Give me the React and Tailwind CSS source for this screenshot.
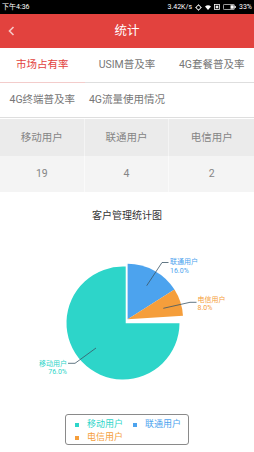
import React from 'react';

const font = { fontFamily: "Roboto, 'Noto Sans CJK SC', sans-serif" };

const tabs = [
  ['市场占有率', 'USIM普及率', '4G套餐普及率'],
  ['4G终端普及率', '4G流量使用情况', ''],
];

const users = [
  { name: '移动用户', count: 19, color: '#2dd5c9' },
  { name: '联通用户', count: 4, color: '#4ca3ee' },
  { name: '电信用户', count: 2, color: '#f59e3b' },
];

function StatusBar() {
  return (
    <div className="h-[14px] bg-black flex items-center justify-between px-[2px] text-white text-[7px]">
      <span>下午4:36</span>
      <div className="flex items-center gap-[3px]">
        <span>3.42K/s</span>
        <svg width="7" height="7" viewBox="0 0 10 10" fill="none" stroke="white" strokeWidth="1.3">
          <circle cx="5" cy="5" r="3" />
          <path d="M5 0.5v1.5M5 8v1.5M0.5 5h1.5M8 5h1.5" />
        </svg>
        <svg width="6" height="5" viewBox="0 0 12 10" fill="white">
          <path d="M6 10L0 3a9 9 0 0 1 12 0z" />
        </svg>
        <svg width="6" height="6" viewBox="0 0 10 10" fill="none" stroke="white" strokeWidth="1.3">
          <rect x="1" y="1" width="8" height="8" />
          <rect x="3.5" y="3.5" width="3" height="3" fill="white" />
        </svg>
        <svg width="13" height="6" viewBox="0 0 26 12" fill="none">
          <rect x="0.8" y="0.8" width="22" height="10.4" rx="2" stroke="white" strokeWidth="1.4" />
          <rect x="15" y="2.5" width="6.5" height="7" fill="white" />
          <rect x="23.5" y="4" width="2" height="4" fill="white" />
        </svg>
        <span>33%</span>
      </div>
    </div>
  );
}

function Header() {
  return (
    <div className="relative h-[34px] bg-[#e2423e] flex items-center justify-center">
      <svg className="absolute left-[8px] top-[12px]" width="7" height="10" viewBox="0 0 7 10" fill="none">
        <path d="M5.5 1L1.5 5l4 4" stroke="#f6c9c7" strokeWidth="1.6" />
      </svg>
      <span className="text-white text-[12.5px]">统计</span>
    </div>
  );
}

function Tabs() {
  return (
    <div>
      <div className="grid grid-cols-3 h-[35px] border-b border-[#dedede]">
        {tabs[0].map((t, i) => (
          <div
            key={t}
            className={
              i === 0
                ? 'flex items-center justify-center text-[#e2423e] border-b border-[#f3cccb] -mb-px'
                : 'flex items-center justify-center text-[#777]'
            }
          >
            {t}
          </div>
        ))}
      </div>
      <div className="grid grid-cols-3 h-[35px] border-b border-[#dedede]">
        {tabs[1].map((t, i) => (
          <div key={i} className="flex items-center justify-center text-[#777]">
            {t}
          </div>
        ))}
      </div>
    </div>
  );
}

function Table() {
  return (
    <div className="mt-[1px] text-[10.5px] text-[#858585]">
      <div className="grid grid-cols-3 h-[37px] bg-[#ebebeb]">
        {users.map((u, i) => (
          <div key={u.name} className={'flex items-center justify-center' + (i < 2 ? ' border-r border-[#f4f4f4]' : '')}>
            {u.name}
          </div>
        ))}
      </div>
      <div className="grid grid-cols-3 h-[36px] bg-[#f4f4f4]">
        {users.map((u, i) => (
          <div key={u.name} className={'flex items-center justify-center' + (i < 2 ? ' border-r border-[#fafafa]' : '')}>
            {u.count}
          </div>
        ))}
      </div>
    </div>
  );
}

function Pie() {
  return (
    <svg width="254" height="186" viewBox="0 224 254 186" className="block">
      <path d="M125.7 324.3L179.5 324.3A56.5 56.5 0 1 1 125.7 267.56Z" fill="#2dd5c9" />
      <path d="M127.6 320.3L127.6 264.8A55.5 55.5 0 0 1 174.46 290.56Z" fill="#4ca3ee" />
      <path d="M127.6 320.3L174.46 290.56A55.5 55.5 0 0 1 182.99 316.81Z" fill="#f59e3b" />

      <g fill="none" stroke="#3b5566" strokeWidth="0.8">
        <path d="M146.7 286.7L162 263.5L168.5 263.5" />
        <path d="M163.3 309.3L190 303.3L196.5 303.3" />
        <path d="M96 349L75 364.3L68 364.3" />
      </g>

      <g fontSize="7" style={font}>
        <text x="170" y="264.5" fill="#4ca3ee">联通用户</text>
        <text x="170" y="273.5" fill="#4ca3ee">16.0%</text>
        <text x="197.5" y="302.5" fill="#f59e3b">电信用户</text>
        <text x="197.5" y="311" fill="#f59e3b">8.0%</text>
        <text x="67" y="366.5" fill="#2dd5c9" textAnchor="end">移动用户</text>
        <text x="67" y="375" fill="#2dd5c9" textAnchor="end">76.0%</text>
      </g>
    </svg>
  );
}

function Legend() {
  return (
    <div className="mx-auto mt-[5px] w-[124px] h-[31px] border border-[#8a8a8a] rounded-[3px] pl-[9px] pt-[3px] text-[9px] flex flex-wrap content-start">
      {users.map((u, i) => (
        <div key={u.name} className={'flex items-center h-[13px]' + (i === 0 ? ' mr-[10px]' : '')}>
          <span className="w-[4px] h-[4px] mr-[8px]" style={{ backgroundColor: u.color }} />
          <span style={{ color: u.color }}>{u.name}</span>
        </div>
      ))}
    </div>
  );
}

export default function App() {
  return (
    <div className="w-[254px] h-[452px] overflow-hidden bg-white text-[10.5px]" style={font}>
      <StatusBar />
      <Header />
      <Tabs />
      <Table />
      <div className="pt-[17px] h-[31px] leading-[14px] text-center text-[10px] text-[#333]">客户管理统计图</div>
      <Pie />
      <Legend />
    </div>
  );
}
